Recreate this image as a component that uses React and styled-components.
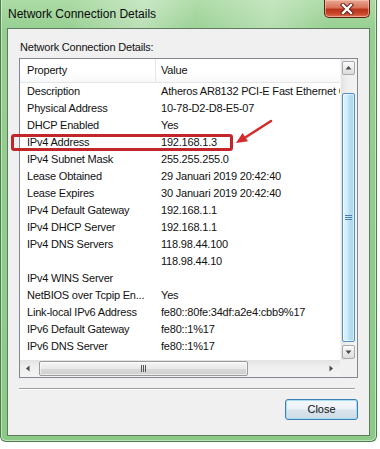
import React from "react";
import styled, { createGlobalStyle } from "styled-components";

const GlobalStyle = createGlobalStyle`
  html, body { margin: 0; padding: 0; background: #ffffff; }
  body { font-family: "Liberation Sans", Arial, sans-serif; color: #111; }
  * { box-sizing: border-box; }
`;

const Window = styled.div`
  position: relative;
  width: 377px;
  height: 442px;
  border: 1px solid #4b7f4a;
  border-top: none;
  border-radius: 0 0 6px 6px;
  padding: 0 6px 5px;
  display: flex;
  flex-direction: column;
  background:
    linear-gradient(100deg, rgba(255,255,255,0) 18%, rgba(255,255,255,0.35) 38%, rgba(255,255,255,0.05) 52%, rgba(255,255,255,0.3) 72%, rgba(255,255,255,0) 88%) top / 100% 28px no-repeat,
    linear-gradient(180deg, #acdba5 0%, #97cf91 30px, #8cc987 100%);
  box-shadow: inset 1px 0 0 rgba(255,255,255,0.45), inset -1px 0 0 rgba(255,255,255,0.45), inset 0 -1px 0 rgba(255,255,255,0.45);
`;

const TitleBar = styled.div`
  height: 28px;
  display: flex;
  align-items: flex-start;
  justify-content: space-between;
`;

const Title = styled.div`
  font-size: 12px;
  line-height: 28px;
  color: #0a0a0a;
  padding-left: 1px;
`;

const CloseX = styled.div`
  width: 46px;
  height: 18px;
  margin-right: 0;
  border: 1px solid #5e2218;
  border-top: none;
  border-radius: 0 0 5px 5px;
  background: linear-gradient(180deg, #e9a894 0%, #d9735a 45%, #b8351c 55%, #c9462a 80%, #e0745a 100%);
  box-shadow: inset 0 0 0 1px rgba(255, 210, 190, 0.55);
  display: flex;
  align-items: center;
  justify-content: center;
`;

const Client = styled.div`
  flex: 1;
  border: 1px solid #5d7c5f;
  background: #f0f0f0;
  display: flex;
  flex-direction: column;
  padding: 0 11px;
`;

const Label = styled.div`
  margin-top: 11px;
  font-size: 11px;
  letter-spacing: -0.2px;
  line-height: 14px;
  padding-left: 1px;
`;

const ListBox = styled.div`
  margin-top: 4px;
  height: 320px;
  border: 1px solid #828790;
  background: #ffffff;
  display: grid;
  grid-template-columns: 1fr 17px;
  grid-template-rows: 1fr 17px;
  overflow: hidden;
`;

const Content = styled.div`
  overflow: hidden;
  font-size: 11px;
  letter-spacing: -0.2px;
`;

const Header = styled.div`
  display: flex;
  height: 24px;
  border-bottom: 1px solid #e6e6e6;
  background: linear-gradient(180deg, #ffffff 0%, #ffffff 60%, #f7f8f9 100%);
`;

const HeaderCell = styled.div`
  flex: 0 0 ${(p) => p.$w}px;
  padding-left: ${(p) => p.$pad}px;
  line-height: 23px;
  white-space: nowrap;
  border-right: ${(p) => (p.$sep ? "1px solid #e5e5e5" : "none")};
`;

const Row = styled.div`
  display: flex;
  height: 17px;
  line-height: 17px;
`;

const Cell = styled.div`
  flex: 0 0 ${(p) => p.$w}px;
  padding-left: ${(p) => p.$pad}px;
  white-space: nowrap;
  overflow: hidden;
`;

const VScroll = styled.div`
  display: flex;
  flex-direction: column;
  background: linear-gradient(90deg, #e3e3e3 0%, #efefef 40%, #f3f3f3 100%);
  border-left: 1px solid #f6f6f6;
`;

const HScroll = styled.div`
  display: flex;
  align-items: stretch;
  background: linear-gradient(180deg, #e3e3e3 0%, #efefef 40%, #f3f3f3 100%);
`;

const Corner = styled.div`
  background: #f0f0f0;
`;

const ArrowBox = styled.div`
  flex: 0 0 17px;
  height: 17px;
  padding: ${(p) => (p.$boxed ? "2px 2px 1px 1px" : "0")};
  display: flex;
`;

const ArrowFace = styled.div`
  flex: 1;
  display: flex;
  align-items: center;
  justify-content: center;
  border-radius: 2px;
  border: 1px solid ${(p) => (p.$boxed ? "#a9a9a9" : "transparent")};
  background: ${(p) => (p.$boxed ? "linear-gradient(180deg, #fbfbfb 0%, #ececec 50%, #dcdcdc 100%)" : "transparent")};
`;

const Gap = styled.div`
  flex: 0 0 ${(p) => p.$s}px;
`;

const VThumb = styled.div`
  flex: 1;
  margin: 0 2px 1px 1px;
  border: 1px solid #4f8fc4;
  border-radius: 2px;
  background: linear-gradient(90deg, #e6f5fd 0%, #cde9f8 45%, #b7def4 55%, #a9d5f0 100%);
  box-shadow: inset 0 0 0 1px rgba(255,255,255,0.6);
  display: flex;
  align-items: center;
  justify-content: center;
`;

const HThumb = styled.div`
  flex: 0 0 209px;
  margin: 1px 0 1px 2px;
  border: 1px solid #9a9a9a;
  border-radius: 2px;
  background: linear-gradient(180deg, #f6f6f6 0%, #e9e9e9 50%, #d9d9d9 52%, #d0d0d0 100%);
  box-shadow: inset 0 0 0 1px rgba(255,255,255,0.6);
  display: flex;
  align-items: center;
  justify-content: center;
`;

const Spacer = styled.div`
  flex: 1;
`;

const Separator = styled.div`
  margin-top: 10px;
  margin-right: 3px;
  height: 2px;
  border-top: 1px solid #a0a0a0;
  border-bottom: 1px solid #ffffff;
`;

const Footer = styled.div`
  display: flex;
  justify-content: flex-end;
  margin-top: 9px;
`;

const Button = styled.div`
  width: 73px;
  height: 21px;
  border: 1px solid #3c7fb1;
  border-radius: 3px;
  background: linear-gradient(180deg, #f4f8fb 0%, #eaf1f6 48%, #d9e4ec 52%, #cfdce6 100%);
  box-shadow: inset 0 0 0 1px #a8ddf5;
  font-size: 11px;
  line-height: 19px;
  text-align: center;
  color: #111;
`;

const Highlight = styled.div`
  position: absolute;
  left: 10px;
  top: 134px;
  width: 222px;
  height: 17px;
  border: 3px solid #c2262b;
  border-radius: 3px;
`;

const Pointer = styled.svg`
  position: absolute;
  left: 232px;
  top: 115px;
`;

const rows = [
  ["Description", "Atheros AR8132 PCI-E Fast Ethernet Controller (NDIS 6.20)"],
  ["Physical Address", "10-78-D2-D8-E5-07"],
  ["DHCP Enabled", "Yes"],
  ["IPv4 Address", "192.168.1.3"],
  ["IPv4 Subnet Mask", "255.255.255.0"],
  ["Lease Obtained", "29 Januari 2019 20:42:40"],
  ["Lease Expires", "30 Januari 2019 20:42:40"],
  ["IPv4 Default Gateway", "192.168.1.1"],
  ["IPv4 DHCP Server", "192.168.1.1"],
  ["IPv4 DNS Servers", "118.98.44.100"],
  ["", "118.98.44.10"],
  ["IPv4 WINS Server", ""],
  ["NetBIOS over Tcpip En...", "Yes"],
  ["Link-local IPv6 Address", "fe80::80fe:34df:a2e4:cbb9%17"],
  ["IPv6 Default Gateway", "fe80::1%17"],
  ["IPv6 DNS Server", "fe80::1%17"],
];

const Tri = ({ dir }) => {
  const paths = {
    up: "M0.5 4.5 L3.5 1 L6.5 4.5 Z",
    down: "M0.5 1.5 L3.5 5 L6.5 1.5 Z",
    left: "M4.5 0.5 L1 3.5 L4.5 6.5 Z",
    right: "M1.5 0.5 L5 3.5 L1.5 6.5 Z",
  };
  return (
    <svg width="7" height="7" viewBox="0 0 7 7">
      <path d={paths[dir]} fill="#4a4a4a" />
    </svg>
  );
};

const VGrip = () => (
  <svg width="7" height="7" viewBox="0 0 7 7">
    <path d="M0 1.5 H7 M0 3.5 H7 M0 5.5 H7" stroke="#4f7fa8" strokeWidth="1" />
  </svg>
);

const HGrip = () => (
  <svg width="7" height="7" viewBox="0 0 7 7">
    <path d="M1.5 0 V7 M3.5 0 V7 M5.5 0 V7" stroke="#555" strokeWidth="1" />
  </svg>
);

export default function App() {
  return (
    <>
      <GlobalStyle />
      <Window>
        <TitleBar>
          <Title>Network Connection Details</Title>
          <CloseX>
            <svg width="16" height="12" viewBox="0 0 16 12">
              <path d="M4 2 L12 10 M12 2 L4 10" stroke="#5a1a10" strokeWidth="4.2" strokeLinecap="square" />
              <path d="M4 2 L12 10 M12 2 L4 10" stroke="#ffffff" strokeWidth="2.4" strokeLinecap="square" />
            </svg>
          </CloseX>
        </TitleBar>
        <Client>
          <Label>Network Connection Details:</Label>
          <ListBox>
            <Content>
              <Header>
                <HeaderCell $w={136} $pad={7} $sep>Property</HeaderCell>
                <HeaderCell $w={300} $pad={5}>Value</HeaderCell>
              </Header>
              {rows.map(([k, v], i) => (
                <Row key={i}>
                  <Cell $w={136} $pad={7}>{k}</Cell>
                  <Cell $w={300} $pad={5}>{v}</Cell>
                </Row>
              ))}
            </Content>
            <VScroll>
              <ArrowBox $boxed>
                <ArrowFace $boxed><Tri dir="up" /></ArrowFace>
              </ArrowBox>
              <Gap $s={17} />
              <VThumb><VGrip /></VThumb>
              <ArrowBox $boxed>
                <ArrowFace $boxed><Tri dir="down" /></ArrowFace>
              </ArrowBox>
            </VScroll>
            <HScroll>
              <ArrowBox>
                <ArrowFace><Tri dir="left" /></ArrowFace>
              </ArrowBox>
              <HThumb><HGrip /></HThumb>
              <Spacer />
              <ArrowBox>
                <ArrowFace><Tri dir="right" /></ArrowFace>
              </ArrowBox>
            </HScroll>
            <Corner />
          </ListBox>
          <Separator />
          <Footer>
            <Button>Close</Button>
          </Footer>
        </Client>
        <Highlight />
        <Pointer width="42" height="32" viewBox="0 0 42 32">
          <path d="M38 6 L13 22" stroke="#d42a2a" strokeWidth="2.5" strokeLinecap="round" />
          <path d="M3 28 L15 26.3 L9.6 17.9 Z" fill="#d42a2a" />
        </Pointer>
      </Window>
    </>
  );
}
